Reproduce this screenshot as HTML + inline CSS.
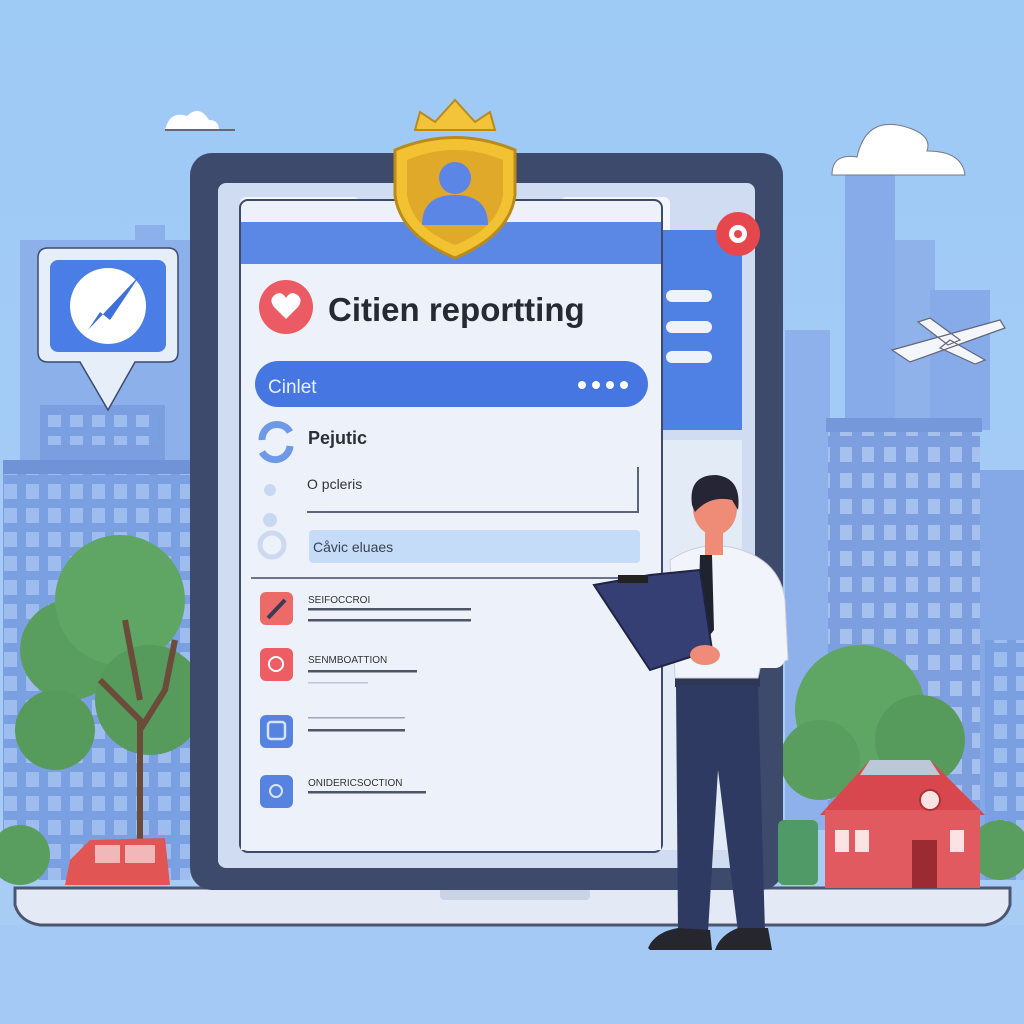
<!DOCTYPE html>
<html><head><meta charset="utf-8"><style>
html,body{margin:0;padding:0;width:1024px;height:1024px;overflow:hidden;background:#a3cbf6}
svg{display:block}
text{font-family:"Liberation Sans",Arial,sans-serif}
</style></head><body>
<svg width="1024" height="1024" viewBox="0 0 1024 1024" xmlns="http://www.w3.org/2000/svg">
<defs>
<linearGradient id="bg" x1="0" y1="0" x2="0" y2="1"><stop offset="0" stop-color="#9ecaf6"/><stop offset="1" stop-color="#a9cdf5"/></linearGradient>
<pattern id="win" width="22" height="24" patternUnits="userSpaceOnUse"><rect width="22" height="24" fill="#7aa0e2"/><rect x="4" y="4" width="13" height="15" fill="#9fbcee"/></pattern>
<pattern id="win2" width="22" height="26" patternUnits="userSpaceOnUse"><rect width="22" height="26" fill="#7d9fe0"/><rect x="4" y="5" width="12" height="15" fill="#a7c1ee"/></pattern>
</defs>
<rect width="1024" height="1024" fill="url(#bg)"/>
<rect x="0" y="925" width="1024" height="99" fill="#a4c9f4"/>
<rect x="845" y="170" width="50" height="260" fill="#86abe8"/>
<rect x="895" y="240" width="40" height="190" fill="#8fb2ea"/>
<rect x="930" y="290" width="60" height="140" fill="#86abe8"/>
<rect x="785" y="330" width="45" height="500" fill="#8fb1eb"/>
<rect x="20" y="240" width="170" height="230" fill="#8cb0ea"/>
<rect x="135" y="225" width="30" height="40" fill="#8cb0ea"/>
<path d="M165 130 q5-20 22-14 q12-12 22 4 q10 0 10 10 z" fill="#fff"/>
<rect x="165" y="129" width="70" height="2" fill="#667"/>
<path d="M832 175 q0-22 25-18 q10-45 55-28 q20 8 15 22 q35 0 38 24 z" fill="#fff" stroke="#778" stroke-width="1"/>
<rect x="40" y="405" width="125" height="55" fill="#7a9edf"/>
<rect x="48" y="415" width="110" height="30" fill="url(#win)"/>
<rect x="3" y="460" width="187" height="420" fill="url(#win)"/>
<rect x="3" y="460" width="187" height="14" fill="#6f93d6"/>
<rect x="828" y="420" width="152" height="460" fill="url(#win2)"/>
<rect x="826" y="418" width="156" height="14" fill="#7598da"/>
<rect x="980" y="470" width="44" height="410" fill="#85a8e6"/>
<rect x="985" y="640" width="39" height="240" fill="url(#win)"/>
<path d="M892 350 L1000 320 L1005 328 L910 362 Z M930 318 L960 340 L948 345 L918 322 Z M950 340 L985 360 L975 364 L940 348 Z" fill="#f3f6fb" stroke="#667" stroke-width="1.2"/>
<circle cx="70" cy="650" r="50" fill="#5a9e5f"/>
<circle cx="120" cy="600" r="65" fill="#5fa563"/>
<circle cx="150" cy="700" r="55" fill="#579b5c"/>
<circle cx="55" cy="730" r="40" fill="#579b5c"/>
<path d="M140 840 L140 720 L100 680 M140 730 L165 690 L175 640 M140 700 L125 620" stroke="#6b4b3a" stroke-width="6" fill="none"/>
<circle cx="20" cy="855" r="30" fill="#5a9e5f"/>
<circle cx="860" cy="710" r="65" fill="#5fa563"/>
<circle cx="920" cy="740" r="45" fill="#579b5c"/>
<circle cx="820" cy="760" r="40" fill="#5a9e5f"/>
<circle cx="1000" cy="850" r="30" fill="#5a9e5f"/>
<path d="M65 885 L70 860 L90 840 L165 838 L170 885 Z" fill="#e25555"/>
<rect x="95" y="845" width="25" height="18" fill="#f0b8b8"/><rect x="125" y="845" width="30" height="18" fill="#f0b8b8"/>
<path d="M15 888 L1010 888 L1010 905 Q1005 922 985 925 L40 925 Q20 922 15 905 Z" fill="#e3eaf5" stroke="#4c5670" stroke-width="3"/>
<rect x="440" y="888" width="150" height="12" rx="4" fill="#c9d3e3"/>
<rect x="190" y="153" width="593" height="737" rx="22" fill="#3e4a6c"/>
<rect x="218" y="183" width="537" height="685" rx="8" fill="#cfdcf1"/>
<rect x="240" y="197" width="120" height="40" rx="6" fill="#f3f6fb"/>
<rect x="560" y="197" width="110" height="40" rx="6" fill="#f3f6fb"/>
<rect x="650" y="230" width="92" height="200" fill="#4f80e3"/>
<rect x="666" y="290" width="46" height="12" rx="6" fill="#eef3fb"/>
<rect x="666" y="321" width="46" height="12" rx="6" fill="#eef3fb"/>
<rect x="666" y="351" width="46" height="12" rx="6" fill="#eef3fb"/>
<rect x="660" y="440" width="82" height="410" fill="#e3ebf7"/>
<rect x="240" y="200" width="422" height="652" rx="8" fill="#edf2fa" stroke="#3e4a6c" stroke-width="2"/>
<rect x="241" y="222" width="420" height="42" fill="#5b88e4"/>
<rect x="241" y="264" width="420" height="586" fill="#edf2fa"/>
<circle cx="286" cy="307" r="27" fill="#ec5a63"/>
<path d="M286 319 L274 307 Q268 299 276 294 Q282 291 286 298 Q290 291 296 294 Q304 299 298 307 Z" fill="#fff"/>
<text x="328" y="321" font-size="33" font-weight="bold" fill="#262b33">Citien reportting</text>
<rect x="255" y="361" width="393" height="46" rx="23" fill="#4676e2"/>
<text x="268" y="393" font-size="19" fill="#eaf0ff">Cinlet</text>
<circle cx="582" cy="385" r="4" fill="#fff"/><circle cx="596" cy="385" r="4" fill="#fff"/><circle cx="610" cy="385" r="4" fill="#fff"/><circle cx="624" cy="385" r="4" fill="#fff"/>
<path d="M262 440 A15 15 0 0 1 290 432 M290 446 A15 15 0 0 1 262 452" stroke="#6d99e8" stroke-width="7" fill="none"/>
<text x="308" y="444" font-size="18" font-weight="bold" fill="#2b2f38">Pejutic</text>
<circle cx="270" cy="490" r="6" fill="#c9d8f2"/><circle cx="270" cy="520" r="7" fill="#c9d8f2"/><circle cx="272" cy="545" r="12" fill="none" stroke="#cdd9f0" stroke-width="5"/>
<text x="307" y="489" font-size="14" fill="#333">O pcleris</text>
<path d="M307 512 L638 512 L638 467" stroke="#5b6478" stroke-width="2" fill="none"/>
<rect x="309" y="530" width="331" height="33" rx="4" fill="#c4dcf8"/>
<text x="313" y="552" font-size="14" fill="#3b4150">Cåvic eluaes</text>
<line x1="251" y1="578" x2="662" y2="578" stroke="#3e4a6c" stroke-width="1.5"/>
<rect x="260" y="592" width="33" height="33" rx="6" fill="#ec6a68"/><line x1="268" y1="618" x2="285" y2="600" stroke="#3b3b55" stroke-width="4"/>
<text x="308" y="603" font-size="10" fill="#333">SEIFOCCROI</text>
<rect x="308" y="608" width="163" height="2.5" fill="#4d5566"/><rect x="308" y="619" width="163" height="2.5" fill="#4d5566"/>
<rect x="260" y="648" width="33" height="33" rx="6" fill="#ec5e63"/><circle cx="276" cy="664" r="7" fill="none" stroke="#fff" stroke-width="2"/>
<text x="308" y="663" font-size="10" fill="#333">SENMBOATTION</text>
<rect x="308" y="670" width="109" height="2.5" fill="#4d5566"/><rect x="308" y="682" width="60" height="1.5" fill="#b9c6dc"/>
<rect x="260" y="715" width="33" height="33" rx="6" fill="#5583df"/><rect x="268" y="722" width="17" height="17" rx="3" fill="none" stroke="#d9e4fa" stroke-width="2.5"/>
<rect x="308" y="717" width="97" height="1.5" fill="#9aa6bd"/><rect x="308" y="729" width="97" height="2.5" fill="#4d5566"/>
<rect x="260" y="775" width="33" height="33" rx="6" fill="#5583df"/><circle cx="276" cy="791" r="6" fill="none" stroke="#d9e4fa" stroke-width="2"/>
<text x="308" y="786" font-size="10" fill="#333">ONIDERICSOCTION</text>
<rect x="308" y="791" width="118" height="2.5" fill="#4d5566"/>
<circle cx="738" cy="234" r="22" fill="#e6474d"/><circle cx="738" cy="234" r="9" fill="#fff"/><circle cx="738" cy="234" r="4" fill="#e6474d"/>
<path d="M415 130 L420 112 L435 122 L455 100 L475 122 L490 112 L495 130 Z" fill="#f3c33a" stroke="#b98a1c" stroke-width="2"/>
<path d="M395 150 Q455 125 515 150 L515 195 Q510 235 455 258 Q400 235 395 195 Z" fill="#f2c232" stroke="#b98a1c" stroke-width="3"/>
<path d="M407 160 Q455 140 503 160 L503 195 Q498 228 455 245 Q412 228 407 195 Z" fill="#e0a92a"/>
<circle cx="455" cy="178" r="16" fill="#5b86e6"/>
<path d="M422 225 Q422 195 455 195 Q488 195 488 225 Z" fill="#5b86e6"/>
<path d="M48 248 L168 248 Q178 248 178 258 L178 352 Q178 362 168 362 L135 362 L108 410 L80 362 L48 362 Q38 362 38 352 L38 258 Q38 248 48 248 Z" fill="#e6eefa" stroke="#3e4a6c" stroke-width="1.5"/>
<rect x="50" y="260" width="116" height="92" rx="8" fill="#4a7de6"/>
<circle cx="108" cy="306" r="38" fill="#fff"/>
<path d="M88 330 L140 275 L110 320 L100 312 Z" fill="#3f6fd9"/>
<rect x="778" y="820" width="40" height="65" rx="6" fill="#4f9a66"/>
<path d="M820 815 L870 760 L930 760 L985 815 Z" fill="#d9474e"/>
<rect x="825" y="810" width="155" height="78" fill="#e05a5f"/>
<path d="M870 760 L930 760 L940 775 L860 775 Z" fill="#bcc7d8"/>
<circle cx="930" cy="800" r="10" fill="#fbe3e3" stroke="#a33" stroke-width="2"/>
<rect x="912" y="840" width="25" height="48" fill="#9b2a33"/>
<rect x="835" y="830" width="14" height="22" fill="#fbe3e3"/><rect x="855" y="830" width="14" height="22" fill="#fbe3e3"/><rect x="950" y="830" width="14" height="22" fill="#fbe3e3"/>
<!-- man -->
<rect x="675" y="675" width="85" height="12" fill="#2f3656"/>
<path d="M676 685 L758 685 L765 932 L738 932 L718 770 L708 932 L678 932 Z" fill="#2f3a63"/>
<path d="M648 948 Q655 932 678 928 L710 930 L712 950 L650 950 Z" fill="#26262e"/>
<path d="M738 928 L768 928 L772 950 L715 950 Q720 935 738 928 Z" fill="#26262e"/>
<path d="M670 560 Q700 540 735 548 Q780 560 785 600 L788 660 L760 668 L758 678 L675 678 Z" fill="#f1f4fa" stroke="#ccd" stroke-width="1"/>
<path d="M700 555 L712 555 L714 630 L706 640 L698 630 Z" fill="#1f2330"/>
<rect x="705" y="530" width="18" height="25" fill="#ef8c78"/>
<ellipse cx="715" cy="508" rx="22" ry="27" fill="#ef8c78"/>
<path d="M692 505 Q688 475 716 475 Q742 478 738 510 L732 500 Q710 495 695 512 Z" fill="#252535"/>
<path d="M594 585 L650 575 L700 570 L712 650 L650 670 Z" fill="#353f74" stroke="#1f2445" stroke-width="2"/>
<rect x="618" y="575" width="30" height="8" fill="#222"/>
<ellipse cx="705" cy="655" rx="15" ry="10" fill="#ef8c78"/>
<rect x="735" y="640" width="50" height="28" rx="10" fill="#f1f4fa"/>
</svg>
</body></html>
